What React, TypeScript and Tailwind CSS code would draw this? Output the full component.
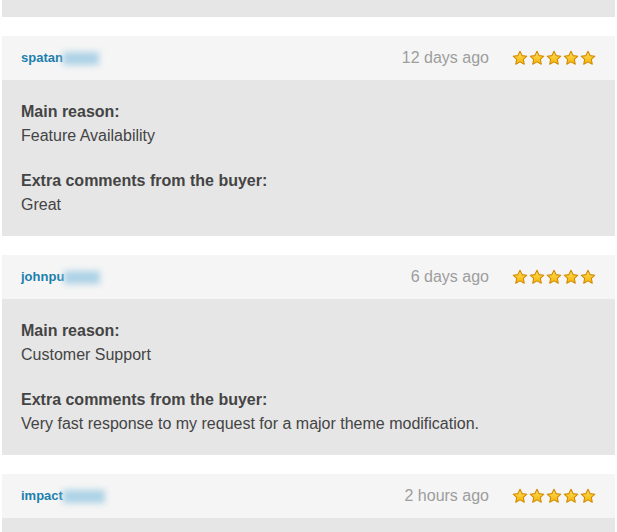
type Review = {
  user: string;
  blurWidth: string;
  when: string;
  reason?: string;
  comment?: string;
};

const reviews: Review[] = [
  {
    user: "spatan",
    blurWidth: "w-[36px]",
    when: "12 days ago",
    reason: "Feature Availability",
    comment: "Great",
  },
  {
    user: "johnpu",
    blurWidth: "w-[36px]",
    when: "6 days ago",
    reason: "Customer Support",
    comment: "Very fast response to my request for a major theme modification.",
  },
  {
    user: "impact",
    blurWidth: "w-[42px]",
    when: "2 hours ago",
  },
];

const Star = () => (
  <svg width="16" height="16" viewBox="0 0 24 24">
    <defs>
      <linearGradient id="starFill" x1="0" y1="0" x2="0" y2="1">
        <stop offset="0" stopColor="#ffe066" />
        <stop offset="1" stopColor="#f5b400" />
      </linearGradient>
    </defs>
    <path
      d="M12 1.8l3.1 6.6 7.1.9-5.2 4.9 1.4 7.1L12 17.8l-6.4 3.5 1.4-7.1-5.2-4.9 7.1-.9z"
      fill="url(#starFill)"
      stroke="#d18a00"
      strokeWidth="1.6"
      strokeLinejoin="round"
    />
  </svg>
);

const ReviewCard = ({ review }: { review: Review }) => (
  <div className="mb-[19px]">
    <div className="flex h-[44px] items-center bg-[#f5f5f5] pl-[19px] pr-[19px]">
      <span className="flex items-center text-[13px] font-bold text-[#1b7fae]">
        {review.user}
        <span className={`inline-block h-[13px] ${review.blurWidth} bg-[#add2e6] blur-[3px]`} />
      </span>
      <span className="ml-auto text-[16px] text-[#9d9d9d]">{review.when}</span>
      <div className="ml-[23px] flex gap-[1px]">
        <Star />
        <Star />
        <Star />
        <Star />
        <Star />
      </div>
    </div>
    <div className="bg-[#e6e6e6] px-[19px] pt-[20px] pb-[19px] text-[16px] leading-[24px] text-[#444]">
      {review.reason ? (
        <>
          <div className="font-bold">Main reason:</div>
          <div>{review.reason}</div>
          <div className="mt-[21px] font-bold">Extra comments from the buyer:</div>
          <div>{review.comment}</div>
        </>
      ) : (
        <div className="h-[96px]" />
      )}
    </div>
  </div>
);

export default function App() {
  return (
    <div className="h-[532px] overflow-hidden bg-white px-[2px] font-['Liberation_Sans',Arial,sans-serif]">
      <div className="mb-[19px] h-[17px] bg-[#e6e6e6]" />
      {reviews.map((r) => (
        <ReviewCard key={r.user} review={r} />
      ))}
    </div>
  );
}
